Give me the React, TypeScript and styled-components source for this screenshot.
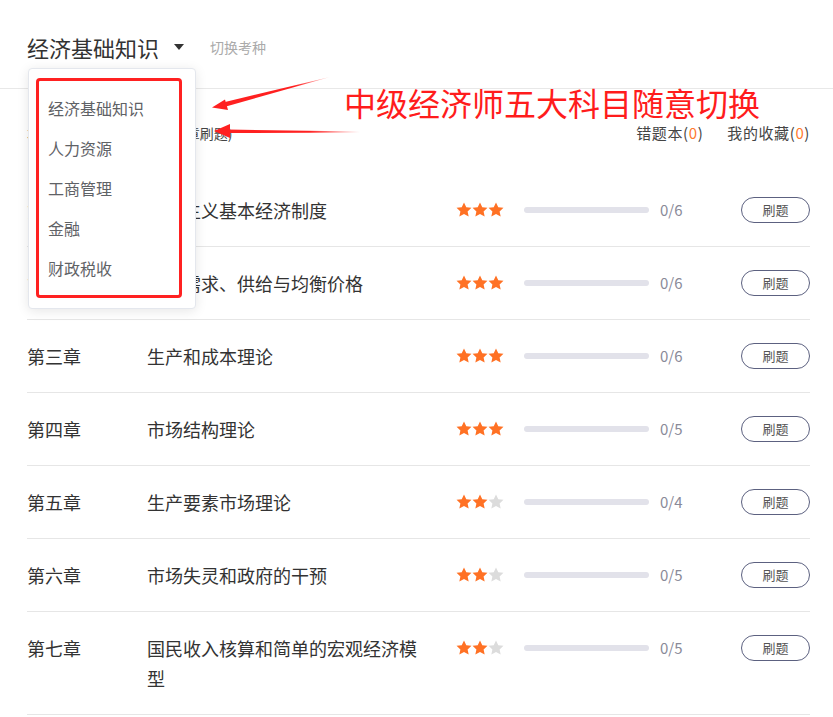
import styled, { createGlobalStyle } from 'styled-components'

const GlobalStyle = createGlobalStyle`
  body {
    margin: 0;
    background: #fff;
    font-family: "Noto Sans CJK SC", "Noto Sans", sans-serif;
    color: #333;
  }
`

const Root = styled.div`
  position: relative;
  width: 833px;
  min-height: 717px;
  overflow: hidden;
`

const Header = styled.div`
  height: 89px;
  box-sizing: border-box;
  border-bottom: 1px solid #e8e8e8;
  display: flex;
  align-items: center;
  padding: 6px 0 0 27px;
`

const Title = styled.div`
  font-size: 22px;
  line-height: 30px;
  color: #333;
`

const Caret = styled.span`
  width: 0;
  height: 0;
  margin: 0 26px 0 15px;
  border-left: 5px solid transparent;
  border-right: 5px solid transparent;
  border-top: 6px solid #333;
`

const Switch = styled.span`
  font-size: 14px;
  color: #aaa;
  line-height: 20px;
`

const SubHeader = styled.div`
  height: 85px;
  box-sizing: border-box;
  padding: 33px 23px 0 27px;
  display: flex;
  justify-content: space-between;
  font-size: 15px;
  line-height: 22px;
  color: #444;
`

const Lead = styled.span`
  font-size: 14px;
`

const Links = styled.div`
  display: flex;
  gap: 24px;
  letter-spacing: 0.6px;
`

const Count = styled.span`
  color: #ff7a2f;
`

const List = styled.div`
  padding: 0 23px 0 27px;
`

const Row = styled.div`
  display: flex;
  align-items: flex-start;
  padding: 21px 0 21px;
  border-bottom: 1px solid #e6e6e6;
  line-height: 30px;
`

const Chapter = styled.div`
  width: 120px;
  flex: none;
  font-size: 18px;
  color: #333;
`

const Name = styled.div`
  width: 309px;
  flex: none;
  box-sizing: border-box;
  padding-right: 25px;
  font-size: 18px;
  color: #333;
`

const Stars = styled.div`
  display: flex;
  align-items: center;
  height: 30px;
  flex: none;
`

const Bar = styled.div`
  width: 125px;
  height: 6px;
  margin: 12px 11px 0 20px;
  border-radius: 3px;
  background: #e2e2ea;
  flex: none;
`

const Progress = styled.div`
  font-size: 15px;
  color: #8a8a98;
`

const Button = styled.button`
  margin: 2px 0 0 auto;
  width: 69px;
  height: 26px;
  box-sizing: border-box;
  border: 1px solid #5c6180;
  border-radius: 13px;
  background: #fff;
  font-family: inherit;
  font-size: 13px;
  line-height: 22px;
  color: #555;
  padding: 0;
`

const Dropdown = styled.div`
  position: absolute;
  left: 28px;
  top: 68px;
  width: 168px;
  height: 241px;
  box-sizing: border-box;
  background: #fff;
  border: 1px solid #e4e7ed;
  border-radius: 4px;
  box-shadow: 0 2px 12px rgba(0, 0, 0, 0.1);
  padding: 19px 0 0 19px;
`

const Option = styled.div`
  height: 40px;
  line-height: 40px;
  font-size: 16px;
  color: #5f6266;
`

const Highlight = styled.div`
  position: absolute;
  left: 7px;
  top: 9px;
  width: 146px;
  height: 220px;
  box-sizing: border-box;
  border: 3px solid #ff2121;
  border-radius: 4px;
`

const Note = styled.div`
  position: absolute;
  left: 344px;
  top: 80px;
  font-size: 32px;
  line-height: 44px;
  color: #ff1c1c;
  white-space: nowrap;
`

const Arrows = styled.svg`
  position: absolute;
  left: 0;
  top: 0;
  pointer-events: none;
`

type Chap = { no: string; name: string; stars: number; total: number }

const chapters: Chap[] = [
  { no: '第一章', name: '社会主义基本经济制度', stars: 3, total: 6 },
  { no: '第二章', name: '市场需求、供给与均衡价格', stars: 3, total: 6 },
  { no: '第三章', name: '生产和成本理论', stars: 3, total: 6 },
  { no: '第四章', name: '市场结构理论', stars: 3, total: 5 },
  { no: '第五章', name: '生产要素市场理论', stars: 2, total: 4 },
  { no: '第六章', name: '市场失灵和政府的干预', stars: 2, total: 5 },
  { no: '第七章', name: '国民收入核算和简单的宏观经济模型', stars: 2, total: 5 },
]

const subjects = ['经济基础知识', '人力资源', '工商管理', '金融', '财政税收']

const Star = ({ on }: { on: boolean }) => (
  <svg width="16" height="16" viewBox="0 0 24 24">
    <path
      d="M12 0.8l3.4 7.1 7.8.9-5.8 5.3 1.6 7.8L12 18l-7 3.9 1.6-7.8-5.8-5.3 7.8-.9z"
      fill={on ? '#ff7124' : '#dcdcdc'}
    />
  </svg>
)

export default function App() {
  return (
    <Root>
      <GlobalStyle />
      <Header>
        <Title>经济基础知识</Title>
        <Caret />
        <Switch>切换考种</Switch>
      </Header>
      <SubHeader>
        <Lead>本科目共七个章节(建议逐章刷题)</Lead>
        <Links>
          <span>
            错题本(<Count>0</Count>)
          </span>
          <span>
            我的收藏(<Count>0</Count>)
          </span>
        </Links>
      </SubHeader>
      <List>
        {chapters.map((c) => (
          <Row key={c.no}>
            <Chapter>{c.no}</Chapter>
            <Name>{c.name}</Name>
            <Stars>
              {[0, 1, 2].map((i) => (
                <Star key={i} on={i < c.stars} />
              ))}
            </Stars>
            <Bar />
            <Progress>0/{c.total}</Progress>
            <Button>刷题</Button>
          </Row>
        ))}
      </List>

      <Dropdown>
        {subjects.map((s) => (
          <Option key={s}>{s}</Option>
        ))}
        <Highlight />
      </Dropdown>

      <Note>中级经济师五大科目随意切换</Note>

      <Arrows width="833" height="717">
        <defs>
          <linearGradient id="fade1" x1="330" y1="77" x2="212" y2="107" gradientUnits="userSpaceOnUse">
            <stop offset="0" stopColor="#ff2020" stopOpacity="0.2" />
            <stop offset="0.3" stopColor="#ff2020" />
            <stop offset="1" stopColor="#ff2020" />
          </linearGradient>
          <linearGradient id="fade2" x1="360" y1="132" x2="215" y2="130" gradientUnits="userSpaceOnUse">
            <stop offset="0" stopColor="#ff2020" stopOpacity="0" />
            <stop offset="0.35" stopColor="#ff2020" />
            <stop offset="1" stopColor="#ff2020" />
          </linearGradient>
        </defs>
        <polygon points="330,77 226,106.5 225,102" fill="url(#fade1)" />
        <polygon points="212,107.5 225,99.5 228,110" fill="#ff2020" />
        <polygon points="360,131.5 228,129.5 228,133 360,132.5" fill="url(#fade2)" />
        <polygon points="214,131 230,124 230,138" fill="#ff2020" />
      </Arrows>
    </Root>
  )
}
